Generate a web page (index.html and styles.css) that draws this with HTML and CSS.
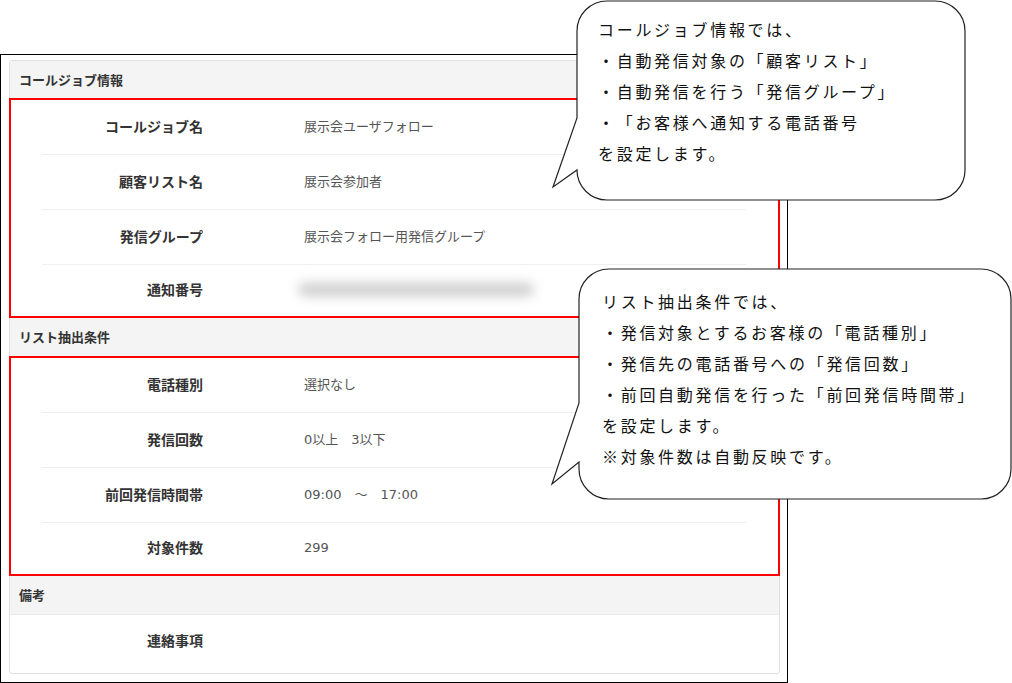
FILE: index.html
```html
<!DOCTYPE html>
<html lang="ja">
<head>
    <meta charset="UTF-8">
    <meta name="viewport" content="width=device-width, initial-scale=1.0">
    <title>コールジョブ情報</title>
    <link rel="stylesheet" href="styles.css">
</head>
<body>
    <div class="page">
        <div class="frame">
            <div class="card">
                <div class="section-title">コールジョブ情報</div>
                <div class="section-body">
                    <div class="row"><div class="label">コールジョブ名</div><div class="value">展示会ユーザフォロー</div></div>
                    <div class="row"><div class="label">顧客リスト名</div><div class="value">展示会参加者</div></div>
                    <div class="row"><div class="label">発信グループ</div><div class="value">展示会フォロー用発信グループ</div></div>
                    <div class="row"><div class="label">通知番号</div><div class="value"><span class="blurred"></span></div></div>
                </div>

                <div class="section-title">リスト抽出条件</div>
                <div class="section-body">
                    <div class="row"><div class="label">電話種別</div><div class="value">選択なし</div></div>
                    <div class="row"><div class="label">発信回数</div><div class="value">0以上　3以下</div></div>
                    <div class="row"><div class="label">前回発信時間帯</div><div class="value">09:00　～　17:00</div></div>
                    <div class="row"><div class="label">対象件数</div><div class="value">299</div></div>
                </div>

                <div class="section-title">備考</div>
                <div class="section-plain">
                    <div class="row"><div class="label">連絡事項</div><div class="value"></div></div>
                </div>
            </div>
        </div>

        <!-- 吹き出し 1 -->
        <div class="callout callout-1">
            <svg class="callout-shape" width="420" height="203" viewBox="0 0 420 203">
                <path d="M57 1 H385 A30 30 0 0 1 415 31 V170 A30 30 0 0 1 385 200 H57 A30 30 0 0 1 27 170 L3 187 L27 118 V31 A30 30 0 0 1 57 1 Z" />
            </svg>
            <div class="callout-text">
                コールジョブ情報では、<br>
                ・自動発信対象の「顧客リスト」<br>
                ・自動発信を行う「発信グループ」<br>
                ・「お客様へ通知する電話番号<br>
                を設定します。
            </div>
        </div>

        <!-- 吹き出し 2 -->
        <div class="callout callout-2">
            <svg class="callout-shape" width="462" height="236" viewBox="0 0 462 236">
                <path d="M59 3 H431 A30 30 0 0 1 461 33 V203 A30 30 0 0 1 431 233 H59 A30 30 0 0 1 29 203 V196 L2 218 L29 137 V33 A30 30 0 0 1 59 3 Z" />
            </svg>
            <div class="callout-text">
                リスト抽出条件では、<br>
                ・発信対象とするお客様の「電話種別」<br>
                ・発信先の電話番号への「発信回数」<br>
                ・前回自動発信を行った「前回発信時間帯」<br>
                を設定します。<br>
                ※対象件数は自動反映です。
            </div>
        </div>
    </div>
</body>
</html>
```

FILE: styles.css
```css
/* ページ全体 */
body {
    margin: 0;
    padding: 0;
    background-color: #fff;
    font-family: "Noto Sans CJK JP", "Noto Sans", sans-serif;
    color: #333;
    text-spacing-trim: space-all;
}

.page {
    position: relative;
    width: 1012px;
    height: 683px;
    padding-top: 54px;
    box-sizing: border-box;
    overflow: hidden;
}

/* スクリーンショットの枠 */
.frame {
    width: 788px;
    height: 629px;
    border: 1px solid #000;
    box-sizing: border-box;
    padding: 5px 7px 0 8px;
}

.card {
    border: 1px solid #e0e0e0;
    border-radius: 3px;
    height: 614px;
    box-sizing: border-box;
    background-color: #fff;
}

.section-title {
    background-color: #f4f4f4;
    height: 37px;
    line-height: 37px;
    padding-left: 9px;
    font-size: 13px;
    font-weight: bold;
    color: #333;
}

.section-title + .section-title,
.section-body + .section-title {
    height: 38px;
    line-height: 38px;
}

/* 赤枠 */
.section-body {
    border: 2px solid #ff0000;
    margin: 0 -1px;
    padding: 0 32px 0 31px;
}

.section-plain {
    border-top: 1px solid #eaeaea;
    padding: 0 32px 0 32px;
}

.row {
    display: flex;
    align-items: center;
    height: 55px;
    padding-bottom: 3px;
    border-bottom: 1px solid #efefef;
    box-sizing: border-box;
}

.row:last-child {
    height: 51px;
    border-bottom: none;
}

.section-plain .row:last-child {
    height: 52px;
}

.label {
    width: 161px;
    text-align: right;
    font-size: 14px;
    font-weight: bold;
    color: #333;
}

.value {
    margin-left: 101px;
    font-family: "DejaVu Sans", "Noto Sans CJK JP", sans-serif;
    font-size: 13px;
    color: #555;
}

/* ぼかした電話番号 */
.blurred {
    display: block;
    width: 236px;
    height: 13px;
    margin-left: -6px;
    background-color: #cdcdcd;
    border-radius: 7px;
    filter: blur(6px);
}

/* 吹き出し */
.callout {
    position: absolute;
    left: 550px;
}

.callout-1 {
    top: 0;
    width: 420px;
    height: 203px;
}

.callout-2 {
    top: 266px;
    width: 462px;
    height: 236px;
}

.callout-shape {
    position: absolute;
    left: 0;
    top: 0;
}

.callout-shape path {
    fill: #fff;
    stroke: #222;
    stroke-width: 1.2;
}

.callout-text {
    position: relative;
    font-size: 16px;
    line-height: 31px;
    letter-spacing: 2.7px;
    color: #111;
    white-space: nowrap;
}

.callout-1 .callout-text {
    padding: 14px 0 0 48px;
}

.callout-2 .callout-text {
    padding: 20px 0 0 52px;
}
```
